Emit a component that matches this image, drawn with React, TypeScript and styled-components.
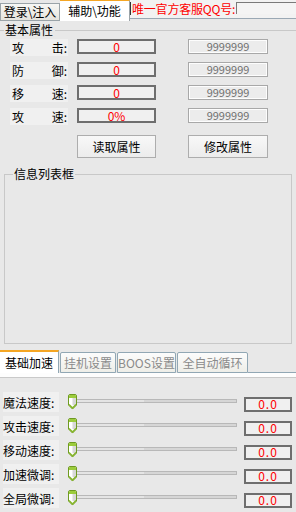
import React from 'react'
import styled, { createGlobalStyle } from 'styled-components'

const GlobalStyle = createGlobalStyle`
    html, body {
        margin: 0;
        padding: 0;
        background: #e8e8e8;
    }
    * {
        box-sizing: border-box;
    }
`

const Window = styled.div`
    width: 296px;
    height: 512px;
    overflow: hidden;
    background: #e8e8e8;
    font-family: "Noto Sans CJK SC", "Liberation Sans", sans-serif;
    font-size: 12px;
    color: #000;
    display: flex;
    flex-direction: column;
`

// 상단 탭
const TopBar = styled.div`
    display: flex;
    align-items: flex-end;
    height: 21px;
`

const TopTab = styled.div<{ $active?: boolean; $width: number }>`
    width: ${(p) => p.$width}px;
    height: ${(p) => (p.$active ? 21 : 18)}px;
    display: flex;
    align-items: center;
    justify-content: center;
    line-height: 14px;
    background: ${(p) => (p.$active ? '#ffffff' : 'linear-gradient(#f7f7f4, #e5e3dc)')};
    border: 1px solid #9aa3a8;
    border-top: ${(p) => (p.$active ? '1px solid #f5a623' : '1px solid #9aa3a8')};
    border-bottom: ${(p) => (p.$active ? 'none' : '1px solid #9aa3a8')};
    border-left: ${(p) => (p.$active ? 'none' : '1px solid #9aa3a8')};
`

const QQArea = styled.div`
    flex: 1;
    align-self: flex-start;
    height: 19px;
    margin-bottom: 2px;
    display: flex;
    align-items: flex-start;
    padding-top: 2px;
    background: #f2f2f2;
    border-bottom: 1px solid #9aa8b4;
`

const QQLabel = styled.div`
    width: 106px;
    height: 13px;
    line-height: 13px;
    padding-left: 1px;
    color: #ff0000;
    border-left: 1px solid #333;
    white-space: nowrap;
    letter-spacing: -0.2px;
`

const QQInput = styled.div`
    flex: 1;
    height: 12px;
    background: #f4f4f4;
    border-top: 1px solid #7a7a7a;
    border-left: 1px solid #7a7a7a;
`

// 기본 속성
const SectionHeader = styled.div`
    margin-top: 1px;
    height: 16px;
    display: flex;
    align-items: center;
    line-height: 16px;
    &::before {
        content: '';
        width: 4px;
        height: 1px;
        background: #c8c8c8;
    }
    &::after {
        content: '';
        flex: 1;
        height: 1px;
        background: #c8c8c8;
    }
    span {
        padding: 0 2px 0 1px;
    }
`

const AttrRows = styled.div`
    padding-left: 10px;
    margin-top: 1px;
    display: flex;
    flex-direction: column;
    gap: 8px;
`

const AttrRow = styled.div`
    display: flex;
    align-items: flex-start;
    height: 15px;
`

const AttrLabel = styled.div`
    width: 58px;
    height: 17px;
    background: #f0f0f0;
    display: flex;
    align-items: center;
    justify-content: space-between;
    padding: 0 1px 0 2px;
`

const Box = styled.div`
    height: 15px;
    display: flex;
    align-items: center;
    justify-content: center;
    line-height: 1;
`

const ValueBox = styled(Box)<{ $width: number; $gap: number }>`
    width: ${(p) => p.$width}px;
    margin-left: ${(p) => p.$gap}px;
    border: 2px solid #6e6e6e;
    background: #f0f0f0;
    color: #ff0000;
`

const LimitBox = styled(Box)`
    width: 80px;
    margin-left: 32px;
    border: 1px solid #a8a8a8;
    box-shadow: inset 0 0 0 1px #fdfdfd;
    background: #ececec;
    color: #707070;
    font-size: 11px;
`

const ButtonRow = styled.div`
    display: flex;
    padding-left: 67px;
    margin-top: 4px;
`

const Button = styled.button<{ $width: number; $gap?: number }>`
    width: ${(p) => p.$width}px;
    height: 23px;
    margin: 0 0 0 ${(p) => p.$gap || 0}px;
    padding: 0;
    border: 1px solid #adadad;
    background: linear-gradient(#f8f8f8, #ececec);
    font-family: inherit;
    font-size: 12px;
    color: #000;
`

const InfoBox = styled.fieldset`
    margin: 9px 4px 0 4px;
    padding: 0;
    height: 177px;
    border: 1px solid #c8c8c8;
    min-inline-size: 0;
`

const InfoLegend = styled.legend`
    margin-left: 8px;
    padding: 0 1px;
    line-height: 14px;
    font-size: 12px;
`

// 하단 탭
const BottomTabs = styled.div`
    margin-top: 6px;
    height: 23px;
    display: flex;
    align-items: flex-end;
`

const BottomTab = styled.div<{ $active?: boolean; $width: number }>`
    width: ${(p) => p.$width}px;
    height: ${(p) => (p.$active ? 23 : 21)}px;
    margin-left: ${(p) => (p.$active ? 0 : 1)}px;
    display: flex;
    align-items: center;
    justify-content: center;
    line-height: 14px;
    color: ${(p) => (p.$active ? '#000' : '#8a8a8a')};
    background: ${(p) => (p.$active ? '#ffffff' : 'linear-gradient(#fcfcfc, #eeeee8)')};
    border: 1px solid #91a7b4;
    border-left: ${(p) => (p.$active ? 'none' : '1px solid #91a7b4')};
    border-top: ${(p) => (p.$active ? '2px solid #f5a623' : '1px solid #91a7b4')};
    border-bottom: ${(p) => (p.$active ? 'none' : '1px solid #91a7b4')};
    border-radius: ${(p) => (p.$active ? '0' : '2px 2px 0 0')};
`

const TabFiller = styled.div`
    flex: 1;
    height: 1px;
    background: #91a7b4;
`

const PanelTop = styled.div`
    height: 5px;
    background: #fdfdfd;
    border-bottom: 1px solid #c9c9c9;
`

const SliderList = styled.div`
    padding-top: 14px;
    display: flex;
    flex-direction: column;
`

const SliderRow = styled.div`
    height: 24px;
    display: flex;
    align-items: center;
    padding-left: 3px;
`

const SliderLabel = styled.div`
    width: 56px;
    height: 20px;
    margin-bottom: 4px;
    background: #f0f0f0;
    display: flex;
    align-items: center;
    white-space: nowrap;
`

const Slider = styled.div`
    position: relative;
    width: 169px;
    height: 16px;
    margin-left: 9px;
    margin-bottom: 4px;
    display: flex;
    align-items: center;
`

const Track = styled.div`
    flex: 1;
    height: 4px;
    margin-bottom: 2px;
    border: 1px solid #b8b8b8;
    background: linear-gradient(to right, #e4e4e4 45%, #d6d6d6 45%);
`

const ThumbWrap = styled.div`
    position: absolute;
    left: 0;
    top: 0;
    width: 9px;
    height: 16px;
`

const SpeedBox = styled(Box)`
    width: 48px;
    margin-left: 7px;
    border: 2px solid #6e6e6e;
    background: #f0f0f0;
    color: #ff0000;
    letter-spacing: 1px;
`

const Thumb = () => (
    <ThumbWrap>
        <svg width="9" height="16" viewBox="0 0 9 16">
            <path d="M0.5 2 Q0.5 0.5 2 0.5 H7 Q8.5 0.5 8.5 2 V11 L4.5 15 L0.5 11 Z" fill="#ffffff" stroke="#6f9a22" />
            <rect x="4.5" y="4" width="3.5" height="7" fill="#d8d8d8" />
            <path d="M1 2 Q1 1 2 1 H7 Q8 1 8 2 V4 H1 Z" fill="#9ccc3c" />
            <path d="M1 10.5 L4.5 14 L8 10.5" fill="none" stroke="#86b52c" strokeWidth="1.6" />
        </svg>
    </ThumbWrap>
)

const attrs = [
    { a: '攻', b: '击:', value: '0' },
    { a: '防', b: '御:', value: '0' },
    { a: '移', b: '速:', value: '0' },
    { a: '攻', b: '速:', value: '0%' },
]

const speeds = ['魔法速度:', '攻击速度:', '移动速度:', '加速微调:', '全局微调:']

const bottomTabs = [
    { name: '基础加速', width: 59, active: true },
    { name: '挂机设置', width: 56 },
    { name: 'BOOS设置', width: 59 },
    { name: '全自动循环', width: 71 },
]

const App = () => {
    return (
        <Window>
            <GlobalStyle />
            <TopBar>
                <TopTab $width={60}>登录\注入</TopTab>
                <TopTab $width={70} $active>
                    辅助\功能
                </TopTab>
                <QQArea>
                    <QQLabel>唯一官方客服QQ号:</QQLabel>
                    <QQInput />
                </QQArea>
            </TopBar>

            <SectionHeader>
                <span>基本属性</span>
            </SectionHeader>
            <AttrRows>
                {attrs.map((row, i) => (
                    <AttrRow key={i}>
                        <AttrLabel>
                            <span>{row.a}</span>
                            <span>{row.b}</span>
                        </AttrLabel>
                        <ValueBox $width={79} $gap={9}>
                            {row.value}
                        </ValueBox>
                        <LimitBox>9999999</LimitBox>
                    </AttrRow>
                ))}
                <ButtonRow>
                    <Button $width={79}>读取属性</Button>
                    <Button $width={80} $gap={32}>
                        修改属性
                    </Button>
                </ButtonRow>
            </AttrRows>

            <InfoBox>
                <InfoLegend>信息列表框</InfoLegend>
            </InfoBox>

            <BottomTabs>
                {bottomTabs.map((t) => (
                    <BottomTab key={t.name} $width={t.width} $active={t.active}>
                        {t.name}
                    </BottomTab>
                ))}
                <TabFiller />
            </BottomTabs>
            <PanelTop />

            <SliderList>
                {speeds.map((name) => (
                    <SliderRow key={name}>
                        <SliderLabel>{name}</SliderLabel>
                        <Slider>
                            <Track />
                            <Thumb />
                        </Slider>
                        <SpeedBox>0.0</SpeedBox>
                    </SliderRow>
                ))}
            </SliderList>
        </Window>
    )
}

export default App
